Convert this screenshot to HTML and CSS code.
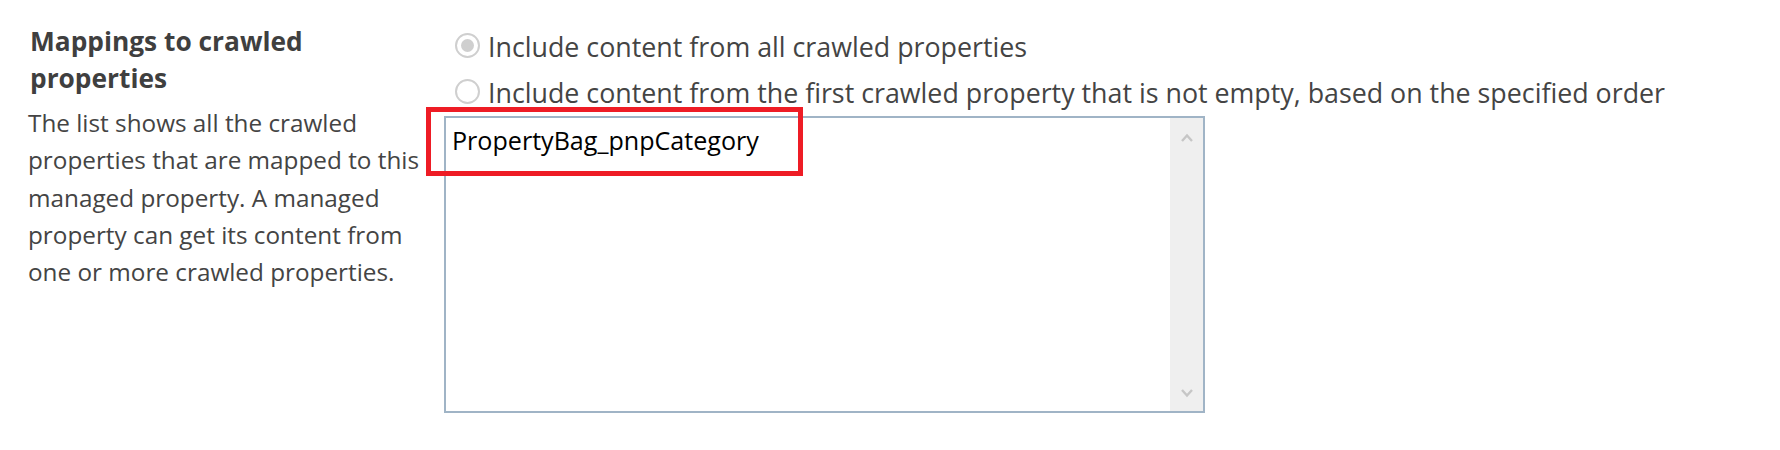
FILE: index.html
```html
<!DOCTYPE html>
<html lang="en">
<head>
<meta charset="utf-8">
<title>Mappings to crawled properties</title>
<link rel="stylesheet" href="styles.css">
</head>
<body>
<div class="section">
  <div class="desc">
    <h3 class="title">Mappings to crawled properties</h3>
    <p class="text">The list shows all the crawled properties that are mapped to this managed property. A managed property can get its content from one or more crawled properties.</p>
  </div>
  <div class="field">
    <label class="radio"><span class="circle checked"></span><span class="label">Include content from all crawled properties</span></label>
    <label class="radio"><span class="circle"></span><span class="label">Include content from the first crawled property that is not empty, based on the specified order</span></label>
    <div class="listbox">
      <div class="items">
        <div class="item">PropertyBag_pnpCategory</div>
      </div>
      <div class="scrollbar">
        <svg class="arrow" width="12" height="9" viewBox="0 0 12 9"><path d="M1 8 L6 2.5 L11 8" fill="none" stroke="#c6c6c6" stroke-width="2.4"/></svg>
        <svg class="arrow" width="12" height="9" viewBox="0 0 12 9"><path d="M1 1 L6 6.5 L11 1" fill="none" stroke="#c6c6c6" stroke-width="2.4"/></svg>
      </div>
      <div class="highlight"></div>
    </div>
  </div>
</div>
</body>
</html>
```

FILE: styles.css
```css
html, body {
  margin: 0;
  padding: 0;
  background: #ffffff;
}

body {
  font-family: "Open Sans", "Noto Sans", sans-serif;
  color: #444444;
}

.section {
  display: flex;
  align-items: flex-start;
  padding: 23px 0 0 28px;
}

.desc {
  width: 404px;
  flex: none;
}

.title {
  margin: 0 0 7px 2px;
  font-size: 26.3px;
  font-weight: 700;
  line-height: 37px;
  color: #3f3f3f;
}

.text {
  margin: 0;
  font-size: 24.3px;
  line-height: 37.25px;
}

.field {
  margin-left: 23px;
  padding-top: 0.6px;
  display: flex;
  flex-direction: column;
}

.radio {
  display: flex;
  align-items: center;
  height: 46px;
  font-size: 26.8px;
  white-space: nowrap;
}

.circle {
  width: 25px;
  height: 25px;
  box-sizing: border-box;
  border: 2px solid #cfcfcf;
  border-radius: 50%;
  margin: 0 8px 3px 0;
  display: flex;
  align-items: center;
  justify-content: center;
  background: #ffffff;
}

.circle.checked::after {
  content: "";
  width: 13px;
  height: 13px;
  border-radius: 50%;
  background: #cfcfcf;
}

.listbox {
  position: relative;
  margin: 0 0 0 -11px;
  width: 761px;
  height: 297px;
  box-sizing: border-box;
  border: 2px solid #a0b4c6;
  display: flex;
  background: #ffffff;
}

.items {
  flex: 1;
  padding: 5px 6px;
}

.item {
  font-size: 25.1px;
  line-height: 34px;
  color: #000000;
}

.scrollbar {
  width: 33px;
  background: #efefef;
  display: flex;
  flex-direction: column;
  justify-content: space-between;
  align-items: center;
  padding: 15px 0 13px;
  box-sizing: border-box;
}

.highlight {
  position: absolute;
  left: -20px;
  top: -11px;
  width: 377px;
  height: 69px;
  box-sizing: border-box;
  border: 5px solid #ee1c25;
}
```
